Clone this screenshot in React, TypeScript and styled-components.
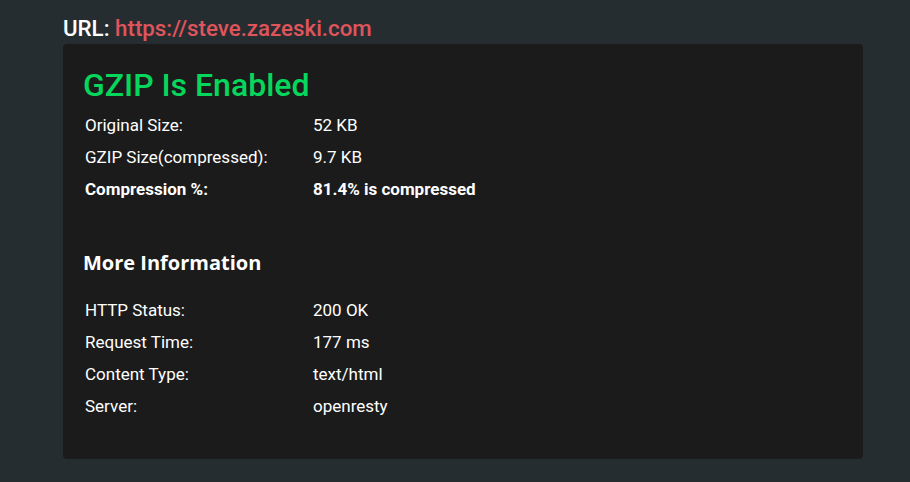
import React from "react";
import styled, { createGlobalStyle } from "styled-components";

const GlobalStyle = createGlobalStyle`
  html, body {
    margin: 0;
    padding: 0;
    background: #262d31;
  }
  body {
    font-family: Roboto, "Liberation Sans", Arial, sans-serif;
    color: #ffffff;
  }
`;

const Page = styled.div`
  padding: 15px 47px 0 63px;
  min-height: 482px;
  box-sizing: border-box;
`;

const UrlLine = styled.div`
  font-size: 22.3px;
  line-height: 26px;
  font-weight: 500;
  color: #ffffff;
`;

const UrlLink = styled.span`
  color: #e0545b;
`;

const Card = styled.div`
  margin-top: 3px;
  background: #1b1b1b;
  border-radius: 4px;
  padding: 22px 20px 37px 20px;
`;

const Title = styled.h1`
  margin: 0 0 5px 0;
  font-size: 32px;
  line-height: 38px;
  font-weight: 500;
  color: #05d75c;
`;

const SubTitle = styled.h2`
  margin: 46px 0 19px 0;
  font-family: "Open Sans", "Liberation Sans", sans-serif;
  font-size: 20px;
  line-height: 24px;
  font-weight: 700;
  color: #ffffff;
`;

const InfoTable = styled.div`
  display: flex;
  flex-direction: column;
`;

const Row = styled.div<{ $bold?: boolean }>`
  display: grid;
  grid-template-columns: 230px 1fr;
  height: 32px;
  align-items: center;
  font-size: 17px;
  line-height: 32px;
  font-weight: ${(p) => (p.$bold ? 700 : 400)};
  color: #ffffff;
`;

const Label = styled.span`
  padding-left: 2px;
`;

const Value = styled.span``;

type Item = { label: string; value: string; bold?: boolean };

const gzipRows: Item[] = [
  { label: "Original Size:", value: "52 KB" },
  { label: "GZIP Size(compressed):", value: "9.7 KB" },
  { label: "Compression %:", value: "81.4% is compressed", bold: true },
];

const moreRows: Item[] = [
  { label: "HTTP Status:", value: "200 OK" },
  { label: "Request Time:", value: "177 ms" },
  { label: "Content Type:", value: "text/html" },
  { label: "Server:", value: "openresty" },
];

const Table = ({ rows }: { rows: Item[] }) => (
  <InfoTable>
    {rows.map((r) => (
      <Row key={r.label} $bold={r.bold}>
        <Label>{r.label}</Label>
        <Value>{r.value}</Value>
      </Row>
    ))}
  </InfoTable>
);

export default function App() {
  return (
    <>
      <GlobalStyle />
      <Page>
        <UrlLine>
          URL: <UrlLink>https://steve.zazeski.com</UrlLink>
        </UrlLine>
        <Card>
          <Title>GZIP Is Enabled</Title>
          <Table rows={gzipRows} />
          <SubTitle>More Information</SubTitle>
          <Table rows={moreRows} />
        </Card>
      </Page>
    </>
  );
}
